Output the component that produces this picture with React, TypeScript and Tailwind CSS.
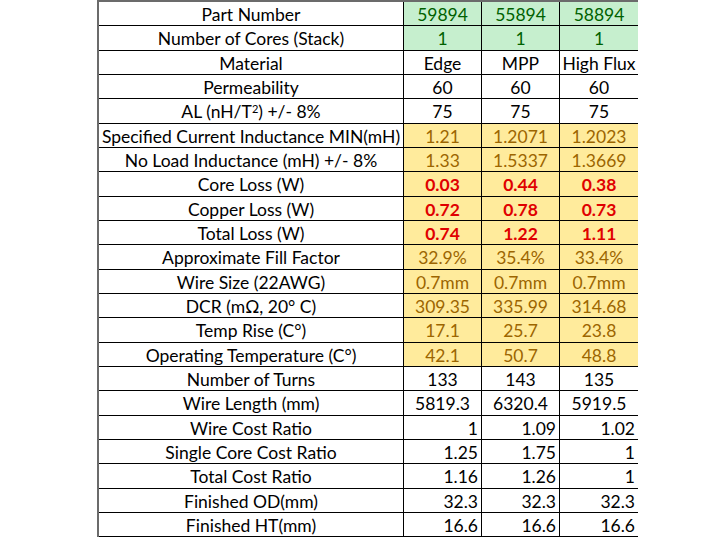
import React from "react";

type Row = {
  label: React.ReactNode;
  vals: string[];
  kind: "green" | "plain" | "yellow" | "red";
  align: "center" | "right";
  h: string;
};

const H25 = "h-[25px]";
const H24 = "h-[24px]";

const rows: Row[] = [
  { label: "Part Number", vals: ["59894", "55894", "58894"], kind: "green", align: "center", h: H24 },
  { label: "Number of Cores (Stack)", vals: ["1", "1", "1"], kind: "green", align: "center", h: H25 },
  { label: "Material", vals: ["Edge", "MPP", "High Flux"], kind: "plain", align: "center", h: H24 },
  { label: "Permeability", vals: ["60", "60", "60"], kind: "plain", align: "center", h: H24 },
  {
    label: (
      <>
        AL (nH/T<sup className="text-[11px] relative -top-[3px]">2</sup>) +/- 8%
      </>
    ),
    vals: ["75", "75", "75"],
    kind: "plain",
    align: "center",
    h: H25,
  },
  { label: "Specified Current Inductance MIN(mH)", vals: ["1.21", "1.2071", "1.2023"], kind: "yellow", align: "center", h: H24 },
  { label: "No Load Inductance (mH) +/- 8%", vals: ["1.33", "1.5337", "1.3669"], kind: "yellow", align: "center", h: H24 },
  { label: "Core Loss (W)", vals: ["0.03", "0.44", "0.38"], kind: "red", align: "center", h: H25 },
  { label: "Copper Loss (W)", vals: ["0.72", "0.78", "0.73"], kind: "red", align: "center", h: H24 },
  { label: "Total Loss (W)", vals: ["0.74", "1.22", "1.11"], kind: "red", align: "center", h: H24 },
  { label: "Approximate Fill Factor", vals: ["32.9%", "35.4%", "33.4%"], kind: "yellow", align: "center", h: H25 },
  { label: "Wire Size (22AWG)", vals: ["0.7mm", "0.7mm", "0.7mm"], kind: "yellow", align: "center", h: H24 },
  { label: "DCR (mΩ, 20° C)", vals: ["309.35", "335.99", "314.68"], kind: "yellow", align: "center", h: H24 },
  { label: "Temp Rise (C°)", vals: ["17.1", "25.7", "23.8"], kind: "yellow", align: "center", h: H25 },
  { label: "Operating Temperature (C°)", vals: ["42.1", "50.7", "48.8"], kind: "yellow", align: "center", h: H24 },
  { label: "Number of Turns", vals: ["133", "143", "135"], kind: "plain", align: "center", h: H24 },
  { label: "Wire Length (mm)", vals: ["5819.3", "6320.4", "5919.5"], kind: "plain", align: "center", h: H25 },
  { label: "Wire Cost Ratio", vals: ["1", "1.09", "1.02"], kind: "plain", align: "right", h: H24 },
  { label: "Single Core Cost Ratio", vals: ["1.25", "1.75", "1"], kind: "plain", align: "right", h: H24 },
  { label: "Total Cost Ratio", vals: ["1.16", "1.26", "1"], kind: "plain", align: "right", h: H25 },
  { label: "Finished OD(mm)", vals: ["32.3", "32.3", "32.3"], kind: "plain", align: "right", h: H24 },
  { label: "Finished HT(mm)", vals: ["16.6", "16.6", "16.6"], kind: "plain", align: "right", h: H24 },
];

function cellClass(kind: Row["kind"], align: Row["align"]) {
  const base = "flex items-center pt-[2px] border-l border-black whitespace-nowrap overflow-visible";
  const al = align === "center" ? "justify-center" : "justify-end pr-[3px]";
  let color = "bg-white text-black";
  if (kind === "green") color = "bg-[#c6efce] text-[#006100]";
  if (kind === "yellow") color = "bg-[#ffeb9c] text-[#9c6500]";
  if (kind === "red") color = "bg-[#ffeb9c] text-[#e00000] font-bold";
  return `${base} ${al} ${color}`;
}

export default function App() {
  return (
    <div className="w-[720px] h-[540px] bg-white overflow-hidden" style={{ fontFamily: "Lato, 'Open Sans', sans-serif" }}>
      <div className="ml-[97px] w-[541px] border-t-2 border-l-2 border-[#6b6b6b] text-[17.5px] leading-none">
        {rows.map((r, i) => (
          <div key={i} className={`grid grid-cols-[304px_78px_78px_79px] border-b border-black ${r.h}`}>
            <div className="flex items-center justify-center pt-[2px] whitespace-nowrap text-black">{r.label}</div>
            {r.vals.map((v, j) => (
              <div key={j} className={cellClass(r.kind, r.align)}>
                {v}
              </div>
            ))}
          </div>
        ))}
      </div>
    </div>
  );
}
